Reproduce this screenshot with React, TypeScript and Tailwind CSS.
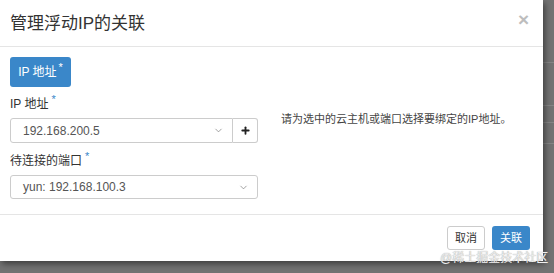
import { ChevronDown, Plus } from 'lucide-react';

const font = { fontFamily: '"Liberation Sans", "Noto Sans CJK SC", sans-serif' };

function Req() {
  return <span className="text-[#3a87c9] text-[11px] relative -top-[5px] ml-[3px]">*</span>;
}

export default function App() {
  return (
    <div className="w-[554px] h-[273px] bg-[#727272] overflow-hidden relative" style={font}>
      {/* faint lines of the page behind the modal */}
      <div className="absolute left-[543px] right-0 top-[62px] border-t border-[#858585]" />
      <div className="absolute left-[543px] right-0 top-[105px] border-t border-[#858585]" />
      <div className="absolute left-[543px] right-0 top-[122px] border-t border-[#858585]" />
      <div className="absolute left-[543px] right-0 top-[143px] border-t border-[#858585]" />

      <div className="w-[543px] h-[261px] bg-white flex flex-col shadow-[2px_3px_6px_rgba(0,0,0,0.45)] relative">
        {/* header */}
        <div className="h-[47px] border-b border-[#e5e5e5] flex items-center justify-between pl-[10px] pr-[14px]">
          <h1 className="text-[17px] text-[#333] leading-none">管理浮动IP的关联</h1>
          <span className="text-[19px] font-bold text-[#bdbdbd] leading-none -mt-[8px]">×</span>
        </div>

        {/* body */}
        <div className="flex-1 px-[10px] pt-[10px]">
          <button className="h-[30px] w-[61px] rounded-[3px] bg-[#3a87c9] text-white text-[12px] flex items-center justify-center">
            IP 地址<span className="text-[11px] relative -top-[5px] ml-[2px]">*</span>
          </button>

          <div className="flex mt-[7px]">
            <div className="w-[248px] flex flex-col">
              <label className="text-[12px] text-[#333] h-[20px] flex items-center">
                IP 地址<Req />
              </label>
              <div className="flex h-[25px] mt-[4px]">
                <div className="flex-1 border border-[#ccc] rounded-l-[3px] flex items-center justify-between pl-[12px] pr-[8px] text-[12px] text-[#555]">
                  192.168.200.5
                  <ChevronDown size={11} strokeWidth={1.5} className="text-[#777]" />
                </div>
                <div className="w-[25px] border border-l-0 border-[#ccc] rounded-r-[3px] flex items-center justify-center">
                  <Plus size={11} strokeWidth={4} className="text-[#222]" />
                </div>
              </div>

              <label className="text-[12px] text-[#333] h-[20px] flex items-center mt-[8px]">
                待连接的端口<Req />
              </label>
              <div className="h-[24px] mt-[4px] border border-[#ccc] rounded-[3px] flex items-center justify-between pl-[12px] pr-[8px] text-[12px] text-[#555]">
                yun: 192.168.100.3
                <ChevronDown size={11} strokeWidth={1.5} className="text-[#777]" />
              </div>
            </div>

            <p className="ml-[23px] mt-[17px] text-[11px] text-[#444]">请为选中的云主机或端口选择要绑定的IP地址。</p>
          </div>
        </div>

        {/* footer */}
        <div className="h-[47px] border-t border-[#e5e5e5] flex items-center justify-end gap-[7px] pr-[13px]">
          <button className="h-[24px] w-[38px] border border-[#ccc] rounded-[3px] text-[11px] text-[#333] bg-white">取消</button>
          <button className="h-[24px] w-[38px] rounded-[3px] text-[11px] text-white bg-[#3a87c9]">关联</button>
        </div>
      </div>

      <span className="absolute left-[440px] top-[252px] text-[12px] text-[#eeeeee] leading-none [text-shadow:0_0_1px_#888]">
        @稀土掘金技术社区
      </span>
    </div>
  );
}
